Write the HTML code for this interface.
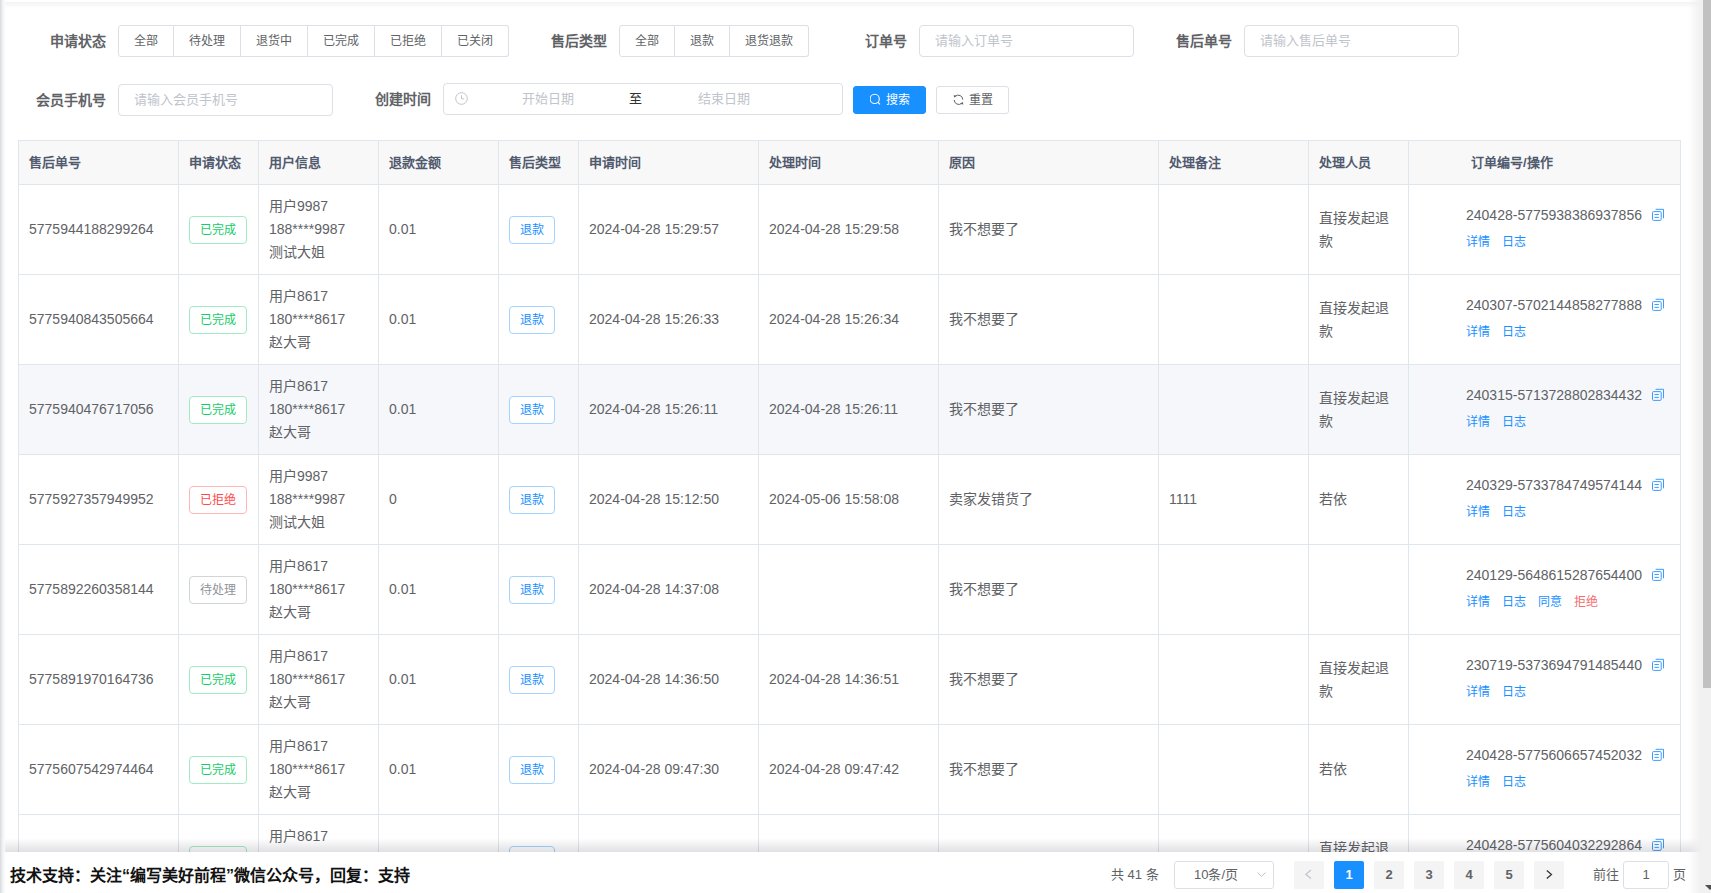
<!DOCTYPE html><html lang="zh-CN"><head><meta charset="utf-8"><style>
*{box-sizing:border-box}
html,body{margin:0;padding:0}
body{width:1711px;height:893px;overflow:hidden;position:relative;background:#fff;font-family:"Liberation Sans",sans-serif;color:#606266;}
.a{position:absolute}
.lbl{position:absolute;font-size:14px;font-weight:bold;color:#606266;line-height:32px;height:32px;text-align:right;white-space:nowrap}
.rg{position:absolute;height:32px;display:flex}
.rb{height:32px;border:1px solid #dcdfe6;border-left:0;font-size:12px;line-height:30px;padding:0 15px;color:#606266;white-space:nowrap;background:#fff}
.rb:first-child{border-left:1px solid #dcdfe6;border-radius:3px 0 0 3px}
.rb:last-child{border-radius:0 3px 3px 0}
.inp{position:absolute;height:32px;border:1px solid #dcdfe6;border-radius:4px;background:#fff;font-size:13px;line-height:30px;padding-left:15px;color:#c0c4cc;white-space:nowrap}
.btn{position:absolute;height:28px;border-radius:3px;font-size:12px;line-height:26px;white-space:nowrap}
.tbl{position:absolute;left:18px;top:140px;width:1663px;border-left:1px solid #dfe6ec;border-top:1px solid #dfe6ec}
.row{position:absolute;left:0;width:1662px}
.c{position:absolute;top:0;border-right:1px solid #dfe6ec;border-bottom:1px solid #dfe6ec;}
.hd .c{background:#f8f8f9;height:44px;font-size:13px;font-weight:bold;color:#515a6e;line-height:23px;padding:10px 10px}
.bd .c{height:90px;font-size:14px;line-height:23px;padding:0 10px;display:flex;align-items:center;white-space:nowrap}
.hv .c{background:#f5f7fa}
.tag{display:inline-block;height:28px;line-height:26px;padding:0 10px;font-size:12px;border:1px solid;border-radius:4px;background:#fff;white-space:nowrap}
.tag.s{color:#13ce66;border-color:#a1ebc2}
.tag.d{color:#ff4949;border-color:#ffb6b6}
.tag.i{color:#909399;border-color:#d3d4d6}
.tag.p{color:#1890ff;border-color:#a3d3ff}
.lk{font-size:12px;color:#1890ff;margin-right:12px}
.lk.d{color:#f56c6c}
.pg{position:absolute;top:861px;height:28px;width:30px;background:#f4f4f5;border-radius:2px;font-size:13px;font-weight:bold;line-height:28px;text-align:center;color:#606266}
</style></head><body>
<div class="a" style="left:0;top:2px;width:1701px;height:5px;background:linear-gradient(#f2f3f5,#fdfdfd)"></div>
<div class="lbl" style="left:18px;top:25px;width:100px;padding-right:12px">申请状态</div>
<div class="rg" style="left:118px;top:25px"><div class="rb">全部</div><div class="rb">待处理</div><div class="rb">退货中</div><div class="rb">已完成</div><div class="rb">已拒绝</div><div class="rb">已关闭</div></div>
<div class="lbl" style="left:519px;top:25px;width:100px;padding-right:12px">售后类型</div>
<div class="rg" style="left:619px;top:25px"><div class="rb">全部</div><div class="rb">退款</div><div class="rb">退货退款</div></div>
<div class="lbl" style="left:819px;top:25px;width:100px;padding-right:12px">订单号</div>
<div class="inp" style="left:919px;top:25px;width:215px">请输入订单号</div>
<div class="lbl" style="left:1144px;top:25px;width:100px;padding-right:12px">售后单号</div>
<div class="inp" style="left:1244px;top:25px;width:215px">请输入售后单号</div>
<div class="lbl" style="left:18px;top:84px;width:100px;padding-right:12px">会员手机号</div>
<div class="inp" style="left:118px;top:84px;width:215px">请输入会员手机号</div>
<div class="lbl" style="left:343px;top:83px;width:100px;padding-right:12px">创建时间</div>
<div class="inp" style="left:443px;top:83px;width:400px;padding:0"></div>
<svg class="a" style="left:455px;top:92px" width="13" height="13" viewBox="0 0 13 13"><circle cx="6.5" cy="6.5" r="5.8" fill="none" stroke="#c0c4cc" stroke-width="1"/><path d="M6.5 3.2V6.8H9.2" fill="none" stroke="#c0c4cc" stroke-width="1"/></svg>
<div class="a" style="left:522px;top:83px;line-height:32px;font-size:13px;color:#c0c4cc">开始日期</div>
<div class="a" style="left:629px;top:83px;line-height:32px;font-size:13px;color:#303133">至</div>
<div class="a" style="left:698px;top:83px;line-height:32px;font-size:13px;color:#c0c4cc">结束日期</div>
<div class="btn" style="left:853px;top:86px;width:73px;background:#1890ff;border:1px solid #1890ff;color:#fff"><svg width="14" height="14" viewBox="0 0 14 14" style="position:absolute;left:16px;top:6px"><circle cx="4.7" cy="5.9" r="4.6" fill="none" stroke="#fff" stroke-width="1.1"/><path d="M8.1 9.3L10 11.3" stroke="#fff" stroke-width="1.1"/></svg><span style="position:absolute;left:32px;top:0">搜索</span></div>
<div class="btn" style="left:936px;top:86px;width:73px;background:#fff;border:1px solid #dcdfe6;color:#606266"><svg width="14" height="14" viewBox="0 0 14 14" style="position:absolute;left:15px;top:6px"><path d="M3.2 3.4A4.5 4.5 0 0 1 10.8 6.6" fill="none" stroke="#606266" stroke-width="1"/><path d="M9.8 10.2A4.5 4.5 0 0 1 2.2 7" fill="none" stroke="#606266" stroke-width="1"/><path d="M1.6 2.2L4.6 2.6L2.4 4.8Z" fill="#606266"/><path d="M11.4 11.4L8.4 11L10.6 8.8Z" fill="#606266"/></svg><span style="position:absolute;left:32px;top:0">重置</span></div>
<div class="tbl" style="height:753px">
<div class="row hd" style="top:0;height:44px">
<div class="c" style="left:0px;width:160px;">售后单号</div>
<div class="c" style="left:160px;width:80px;">申请状态</div>
<div class="c" style="left:240px;width:120px;">用户信息</div>
<div class="c" style="left:360px;width:120px;">退款金额</div>
<div class="c" style="left:480px;width:80px;">售后类型</div>
<div class="c" style="left:560px;width:180px;">申请时间</div>
<div class="c" style="left:740px;width:180px;">处理时间</div>
<div class="c" style="left:920px;width:220px;">原因</div>
<div class="c" style="left:1140px;width:150px;">处理备注</div>
<div class="c" style="left:1290px;width:100px;">处理人员</div>
<div class="c" style="left:1390px;width:272px;padding-left:62px">订单编号/操作</div>
</div>
<div class="row bd" style="top:44px;height:90px">
<div class="c" style="left:0px;width:160px;">5775944188299264</div>
<div class="c" style="left:160px;width:80px;"><span class="tag s">已完成</span></div>
<div class="c" style="left:240px;width:120px;"><div>用户9987<br>188****9987<br>测试大姐</div></div>
<div class="c" style="left:360px;width:120px;">0.01</div>
<div class="c" style="left:480px;width:80px;"><span class="tag p">退款</span></div>
<div class="c" style="left:560px;width:180px;">2024-04-28 15:29:57</div>
<div class="c" style="left:740px;width:180px;">2024-04-28 15:29:58</div>
<div class="c" style="left:920px;width:220px;">我不想要了</div>
<div class="c" style="left:1140px;width:150px;"></div>
<div class="c" style="left:1290px;width:100px;"><div>直接发起退<br>款</div></div>
<div class="c" style="left:1390px;width:272px;align-items:flex-start;padding-top:19px"><div style="position:relative;padding-left:47px"><div>240428-5775938386937856</div><div style="height:26px;line-height:26px;margin-top:1px"><span class="lk p">详情</span><span class="lk p">日志</span></div><svg width="14" height="14" viewBox="0 0 14 14" style="position:absolute;left:232px;top:4px"><rect x="1.5" y="3.6" width="8.7" height="8.8" rx="1" fill="none" stroke="#3a9cff" stroke-width="1"/><path d="M4.6 1.3H12.5V10.3" fill="none" stroke="#3a9cff" stroke-width="1"/><path d="M3.5 6.5H7.8M3.5 9.4H7.8" stroke="#3a9cff" stroke-width="1"/></svg></div></div>
</div>
<div class="row bd" style="top:134px;height:90px">
<div class="c" style="left:0px;width:160px;">5775940843505664</div>
<div class="c" style="left:160px;width:80px;"><span class="tag s">已完成</span></div>
<div class="c" style="left:240px;width:120px;"><div>用户8617<br>180****8617<br>赵大哥</div></div>
<div class="c" style="left:360px;width:120px;">0.01</div>
<div class="c" style="left:480px;width:80px;"><span class="tag p">退款</span></div>
<div class="c" style="left:560px;width:180px;">2024-04-28 15:26:33</div>
<div class="c" style="left:740px;width:180px;">2024-04-28 15:26:34</div>
<div class="c" style="left:920px;width:220px;">我不想要了</div>
<div class="c" style="left:1140px;width:150px;"></div>
<div class="c" style="left:1290px;width:100px;"><div>直接发起退<br>款</div></div>
<div class="c" style="left:1390px;width:272px;align-items:flex-start;padding-top:19px"><div style="position:relative;padding-left:47px"><div>240307-5702144858277888</div><div style="height:26px;line-height:26px;margin-top:1px"><span class="lk p">详情</span><span class="lk p">日志</span></div><svg width="14" height="14" viewBox="0 0 14 14" style="position:absolute;left:232px;top:4px"><rect x="1.5" y="3.6" width="8.7" height="8.8" rx="1" fill="none" stroke="#3a9cff" stroke-width="1"/><path d="M4.6 1.3H12.5V10.3" fill="none" stroke="#3a9cff" stroke-width="1"/><path d="M3.5 6.5H7.8M3.5 9.4H7.8" stroke="#3a9cff" stroke-width="1"/></svg></div></div>
</div>
<div class="row bd hv" style="top:224px;height:90px">
<div class="c" style="left:0px;width:160px;">5775940476717056</div>
<div class="c" style="left:160px;width:80px;"><span class="tag s">已完成</span></div>
<div class="c" style="left:240px;width:120px;"><div>用户8617<br>180****8617<br>赵大哥</div></div>
<div class="c" style="left:360px;width:120px;">0.01</div>
<div class="c" style="left:480px;width:80px;"><span class="tag p">退款</span></div>
<div class="c" style="left:560px;width:180px;">2024-04-28 15:26:11</div>
<div class="c" style="left:740px;width:180px;">2024-04-28 15:26:11</div>
<div class="c" style="left:920px;width:220px;">我不想要了</div>
<div class="c" style="left:1140px;width:150px;"></div>
<div class="c" style="left:1290px;width:100px;"><div>直接发起退<br>款</div></div>
<div class="c" style="left:1390px;width:272px;align-items:flex-start;padding-top:19px"><div style="position:relative;padding-left:47px"><div>240315-5713728802834432</div><div style="height:26px;line-height:26px;margin-top:1px"><span class="lk p">详情</span><span class="lk p">日志</span></div><svg width="14" height="14" viewBox="0 0 14 14" style="position:absolute;left:232px;top:4px"><rect x="1.5" y="3.6" width="8.7" height="8.8" rx="1" fill="none" stroke="#3a9cff" stroke-width="1"/><path d="M4.6 1.3H12.5V10.3" fill="none" stroke="#3a9cff" stroke-width="1"/><path d="M3.5 6.5H7.8M3.5 9.4H7.8" stroke="#3a9cff" stroke-width="1"/></svg></div></div>
</div>
<div class="row bd" style="top:314px;height:90px">
<div class="c" style="left:0px;width:160px;">5775927357949952</div>
<div class="c" style="left:160px;width:80px;"><span class="tag d">已拒绝</span></div>
<div class="c" style="left:240px;width:120px;"><div>用户9987<br>188****9987<br>测试大姐</div></div>
<div class="c" style="left:360px;width:120px;">0</div>
<div class="c" style="left:480px;width:80px;"><span class="tag p">退款</span></div>
<div class="c" style="left:560px;width:180px;">2024-04-28 15:12:50</div>
<div class="c" style="left:740px;width:180px;">2024-05-06 15:58:08</div>
<div class="c" style="left:920px;width:220px;">卖家发错货了</div>
<div class="c" style="left:1140px;width:150px;">1111</div>
<div class="c" style="left:1290px;width:100px;">若依</div>
<div class="c" style="left:1390px;width:272px;align-items:flex-start;padding-top:19px"><div style="position:relative;padding-left:47px"><div>240329-5733784749574144</div><div style="height:26px;line-height:26px;margin-top:1px"><span class="lk p">详情</span><span class="lk p">日志</span></div><svg width="14" height="14" viewBox="0 0 14 14" style="position:absolute;left:232px;top:4px"><rect x="1.5" y="3.6" width="8.7" height="8.8" rx="1" fill="none" stroke="#3a9cff" stroke-width="1"/><path d="M4.6 1.3H12.5V10.3" fill="none" stroke="#3a9cff" stroke-width="1"/><path d="M3.5 6.5H7.8M3.5 9.4H7.8" stroke="#3a9cff" stroke-width="1"/></svg></div></div>
</div>
<div class="row bd" style="top:404px;height:90px">
<div class="c" style="left:0px;width:160px;">5775892260358144</div>
<div class="c" style="left:160px;width:80px;"><span class="tag i">待处理</span></div>
<div class="c" style="left:240px;width:120px;"><div>用户8617<br>180****8617<br>赵大哥</div></div>
<div class="c" style="left:360px;width:120px;">0.01</div>
<div class="c" style="left:480px;width:80px;"><span class="tag p">退款</span></div>
<div class="c" style="left:560px;width:180px;">2024-04-28 14:37:08</div>
<div class="c" style="left:740px;width:180px;"></div>
<div class="c" style="left:920px;width:220px;">我不想要了</div>
<div class="c" style="left:1140px;width:150px;"></div>
<div class="c" style="left:1290px;width:100px;"></div>
<div class="c" style="left:1390px;width:272px;align-items:flex-start;padding-top:19px"><div style="position:relative;padding-left:47px"><div>240129-5648615287654400</div><div style="height:26px;line-height:26px;margin-top:1px"><span class="lk p">详情</span><span class="lk p">日志</span><span class="lk p">同意</span><span class="lk d">拒绝</span></div><svg width="14" height="14" viewBox="0 0 14 14" style="position:absolute;left:232px;top:4px"><rect x="1.5" y="3.6" width="8.7" height="8.8" rx="1" fill="none" stroke="#3a9cff" stroke-width="1"/><path d="M4.6 1.3H12.5V10.3" fill="none" stroke="#3a9cff" stroke-width="1"/><path d="M3.5 6.5H7.8M3.5 9.4H7.8" stroke="#3a9cff" stroke-width="1"/></svg></div></div>
</div>
<div class="row bd" style="top:494px;height:90px">
<div class="c" style="left:0px;width:160px;">5775891970164736</div>
<div class="c" style="left:160px;width:80px;"><span class="tag s">已完成</span></div>
<div class="c" style="left:240px;width:120px;"><div>用户8617<br>180****8617<br>赵大哥</div></div>
<div class="c" style="left:360px;width:120px;">0.01</div>
<div class="c" style="left:480px;width:80px;"><span class="tag p">退款</span></div>
<div class="c" style="left:560px;width:180px;">2024-04-28 14:36:50</div>
<div class="c" style="left:740px;width:180px;">2024-04-28 14:36:51</div>
<div class="c" style="left:920px;width:220px;">我不想要了</div>
<div class="c" style="left:1140px;width:150px;"></div>
<div class="c" style="left:1290px;width:100px;"><div>直接发起退<br>款</div></div>
<div class="c" style="left:1390px;width:272px;align-items:flex-start;padding-top:19px"><div style="position:relative;padding-left:47px"><div>230719-5373694791485440</div><div style="height:26px;line-height:26px;margin-top:1px"><span class="lk p">详情</span><span class="lk p">日志</span></div><svg width="14" height="14" viewBox="0 0 14 14" style="position:absolute;left:232px;top:4px"><rect x="1.5" y="3.6" width="8.7" height="8.8" rx="1" fill="none" stroke="#3a9cff" stroke-width="1"/><path d="M4.6 1.3H12.5V10.3" fill="none" stroke="#3a9cff" stroke-width="1"/><path d="M3.5 6.5H7.8M3.5 9.4H7.8" stroke="#3a9cff" stroke-width="1"/></svg></div></div>
</div>
<div class="row bd" style="top:584px;height:90px">
<div class="c" style="left:0px;width:160px;">5775607542974464</div>
<div class="c" style="left:160px;width:80px;"><span class="tag s">已完成</span></div>
<div class="c" style="left:240px;width:120px;"><div>用户8617<br>180****8617<br>赵大哥</div></div>
<div class="c" style="left:360px;width:120px;">0.01</div>
<div class="c" style="left:480px;width:80px;"><span class="tag p">退款</span></div>
<div class="c" style="left:560px;width:180px;">2024-04-28 09:47:30</div>
<div class="c" style="left:740px;width:180px;">2024-04-28 09:47:42</div>
<div class="c" style="left:920px;width:220px;">我不想要了</div>
<div class="c" style="left:1140px;width:150px;"></div>
<div class="c" style="left:1290px;width:100px;">若依</div>
<div class="c" style="left:1390px;width:272px;align-items:flex-start;padding-top:19px"><div style="position:relative;padding-left:47px"><div>240428-5775606657452032</div><div style="height:26px;line-height:26px;margin-top:1px"><span class="lk p">详情</span><span class="lk p">日志</span></div><svg width="14" height="14" viewBox="0 0 14 14" style="position:absolute;left:232px;top:4px"><rect x="1.5" y="3.6" width="8.7" height="8.8" rx="1" fill="none" stroke="#3a9cff" stroke-width="1"/><path d="M4.6 1.3H12.5V10.3" fill="none" stroke="#3a9cff" stroke-width="1"/><path d="M3.5 6.5H7.8M3.5 9.4H7.8" stroke="#3a9cff" stroke-width="1"/></svg></div></div>
</div>
<div class="row bd" style="top:674px;height:90px">
<div class="c" style="left:0px;width:160px;">5775604??</div>
<div class="c" style="left:160px;width:80px;"><span class="tag s">已完成</span></div>
<div class="c" style="left:240px;width:120px;"><div>用户8617<br>180****8617<br>赵大哥</div></div>
<div class="c" style="left:360px;width:120px;">0.01</div>
<div class="c" style="left:480px;width:80px;"><span class="tag p">退款</span></div>
<div class="c" style="left:560px;width:180px;">2024-04-28 09:4</div>
<div class="c" style="left:740px;width:180px;">2024-04-28 09:4</div>
<div class="c" style="left:920px;width:220px;">我不想要了</div>
<div class="c" style="left:1140px;width:150px;"></div>
<div class="c" style="left:1290px;width:100px;"><div>直接发起退<br>款</div></div>
<div class="c" style="left:1390px;width:272px;align-items:flex-start;padding-top:19px"><div style="position:relative;padding-left:47px"><div>240428-5775604032292864</div><div style="height:26px;line-height:26px;margin-top:1px"><span class="lk p">详情</span><span class="lk p">日志</span></div><svg width="14" height="14" viewBox="0 0 14 14" style="position:absolute;left:232px;top:4px"><rect x="1.5" y="3.6" width="8.7" height="8.8" rx="1" fill="none" stroke="#3a9cff" stroke-width="1"/><path d="M4.6 1.3H12.5V10.3" fill="none" stroke="#3a9cff" stroke-width="1"/><path d="M3.5 6.5H7.8M3.5 9.4H7.8" stroke="#3a9cff" stroke-width="1"/></svg></div></div>
</div>
</div>
<div class="a" style="left:0;top:838px;width:1701px;height:14px;background:linear-gradient(rgba(0,6,30,0),rgba(0,6,30,0.12))"></div>
<div class="a" style="left:0;top:852px;width:1701px;height:41px;background:#fff"></div>
<div class="a" style="left:6px;top:838px;width:0"></div>
<div class="a" style="left:10px;top:855px;line-height:41px;font-size:16px;font-weight:bold;color:#111;white-space:nowrap">技术支持：关注“编写美好前程”微信公众号，回复：支持</div>
<div class="a" style="left:1111px;top:861px;line-height:28px;font-size:13px;color:#606266;white-space:nowrap">共 41 条</div>
<div class="a" style="left:1174px;top:861px;width:100px;height:28px;border:1px solid #dcdfe6;border-radius:3px;font-size:13px;line-height:26px;color:#606266;padding-left:19px">10条/页<svg width="10" height="6" viewBox="0 0 10 6" style="position:absolute;left:82px;top:10px"><path d="M0.5 0.5L4.5 4.5L8.5 0.5" fill="none" stroke="#c0c4cc" stroke-width="1"/></svg></div>
<div class="pg" style="left:1294px;color:#c0c4cc"><svg width="8" height="12" viewBox="0 0 8 12" style="position:absolute;left:11px;top:8px"><path d="M6 1L0.8 5.3L6 9.5" fill="none" stroke="#c0c4cc" stroke-width="1.2"/></svg></div>
<div class="pg" style="left:1334px;background:#1890ff;color:#fff">1</div>
<div class="pg" style="left:1374px">2</div>
<div class="pg" style="left:1414px">3</div>
<div class="pg" style="left:1454px">4</div>
<div class="pg" style="left:1494px">5</div>
<div class="pg" style="left:1534px"><svg width="8" height="12" viewBox="0 0 8 12" style="position:absolute;left:12px;top:8px"><path d="M0.8 1.5L5.5 5.5L0.8 9.5" fill="none" stroke="#303133" stroke-width="1.2"/></svg></div>
<div class="a" style="left:1593px;top:861px;line-height:28px;font-size:13px;color:#606266">前往</div>
<div class="a" style="left:1623px;top:861px;width:46px;height:28px;border:1px solid #dcdfe6;border-radius:3px;font-size:13px;line-height:26px;text-align:center;color:#606266">1</div>
<div class="a" style="left:1673px;top:861px;line-height:28px;font-size:13px;color:#606266">页</div>
<div class="a" style="left:1688px;top:0;width:13px;height:893px;background:linear-gradient(90deg,rgba(240,240,240,0),#f0f0f0)"></div>
<div class="a" style="left:1701px;top:0;width:10px;height:893px;background:#f1f1f1"></div>
<div class="a" style="left:1703px;top:0;width:8px;height:688px;background:#c1c1c1"></div>
<svg class="a" style="left:1705px;top:885px" width="10" height="6" viewBox="0 0 10 6"><path d="M0 0H10L5 5Z" fill="#505050"/></svg>
<div class="a" style="left:0;top:0;width:6px;height:893px;background:linear-gradient(90deg,#d6dadd,#eceef0 35%,#fafafa 70%,rgba(255,255,255,0))"></div>
</body></html>
